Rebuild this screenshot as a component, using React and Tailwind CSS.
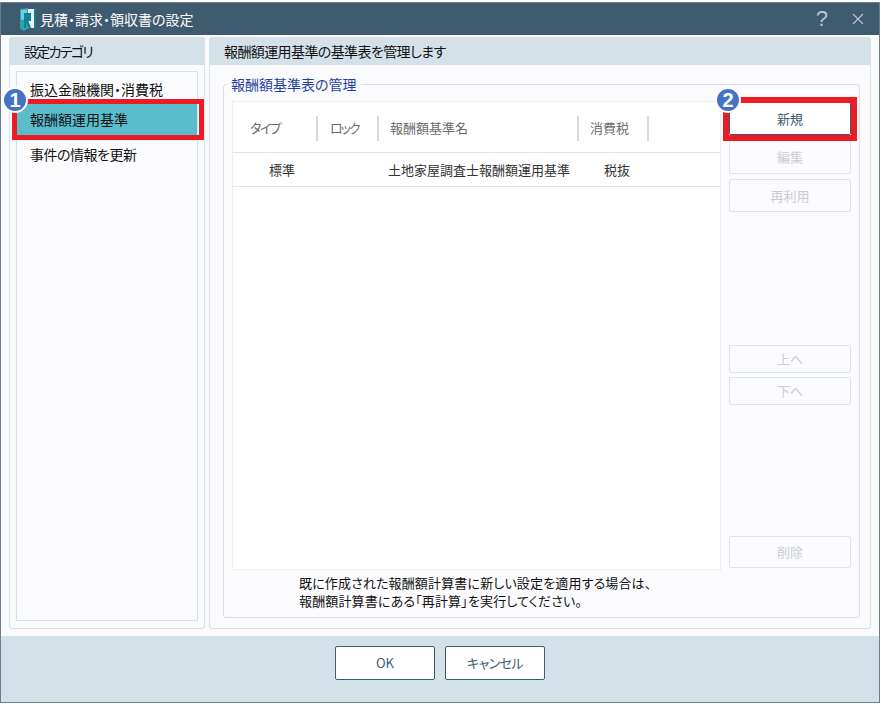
const font = "[font-family:'Noto_Sans_CJK_JP',sans-serif] [font-feature-settings:'palt']";

function Logo() {
  return (
    <svg width="18" height="24" viewBox="0 0 18 24" className="shrink-0">
      <path d="M1 2 L9 1 L9 22 L4 24 L1 21 Z" fill="#2aa3b3" />
      <path d="M2 3 L8 2.5 L8 12 L2 13 Z" fill="#6fd0da" />
      <path d="M9 2 H15 V21 H9 Z" fill="#eef4f6" />
      <path d="M15 1 H17 V22 H15 Z" fill="#1a7a90" />
      <path d="M5 6 H12 V14 H9.5 L12 21 H9.5 L7 14.5 V21 H5 Z" fill="#13809a" />
    </svg>
  );
}

function Badge({ n, className }) {
  return (
    <div className={"absolute flex h-[26px] w-[26px] items-center justify-center rounded-full border-2 border-white bg-[#4472c4] text-[20px] font-bold leading-none text-white [font-family:'Liberation_Sans',sans-serif] " + className}>
      {n}
    </div>
  );
}

function SideBtn({ children, className = "", on = false }) {
  return (
    <div className={"flex w-[122px] items-center justify-center rounded-[2px] border text-[13px] " + (on ? "border-[#3f5b70] bg-white text-[#3f5b70] " : "border-[#d9e5ec] bg-[#fbfbfd] text-[#c9ced3] ") + className}>
      {children}
    </div>
  );
}

function FooterBtn({ children, className = "" }) {
  return (
    <div className={"flex h-[34px] w-[100px] items-center justify-center rounded-[2px] border border-[#3f5b70] bg-white text-[13px] text-[#3f5b70] " + className}>
      {children}
    </div>
  );
}

export default function App() {
  return (
    <div className={"h-[704px] w-[880px] bg-white pt-[2px] text-[#111] " + font}>
      <div className="flex h-[701px] w-[880px] flex-col border border-[#6b7f92] bg-[#fbfbfd]">
        {/* title */}
        <div className="flex h-[32px] shrink-0 items-center bg-[#3f5b70] pl-[18px] pr-[15px] text-white">
          <Logo />
          <span className="ml-[3px] text-[14px]">見積・請求・領収書の設定</span>
          <span className="ml-auto mr-[24px] text-[22px] leading-none text-[#b9c4cd] [font-family:'Liberation_Sans',sans-serif]">?</span>
          <svg width="12" height="12" viewBox="0 0 12 12" className="text-[#b9c4cd]">
            <path d="M1 1 L11 11 M11 1 L1 11" stroke="currentColor" strokeWidth="1.2" />
          </svg>
        </div>

        {/* body */}
        <div className="flex h-[601px] shrink-0 gap-[4px] pl-[8px] pr-[8px] pt-[2px]">
          {/* left */}
          <div className="relative flex h-[592px] w-[196px] shrink-0 flex-col rounded-[3px] border border-t-0 border-[#d5e1e9]">
            <div className="-mx-px flex h-[28px] shrink-0 items-center rounded-t-[3px] bg-[#d5e1e9] pl-[15px] text-[14px] tracking-[-1.7px]">設定カテゴリ</div>
            <div className="mx-[6px] mt-[6px] flex h-[550px] flex-col border border-[#d2e2ea] pt-[1px] text-[14px]">
              <div className="flex h-[31px] items-start pl-[13px] pt-[6px] leading-[20px]">振込金融機関・消費税</div>
              <div className="flex h-[31px] items-center bg-[#5bbdcb] pl-[13px]">報酬額運用基準</div>
              <div className="flex h-[38px] items-center pl-[13px] tracking-[-0.5px]">事件の情報を更新</div>
            </div>
            <div className="absolute left-[2px] top-[62px] h-[41px] w-[192px] border-[5px] border-[#ed1c24]" />
          </div>

          {/* right */}
          <div className="relative flex h-[592px] w-[662px] shrink-0 flex-col rounded-[3px] border border-t-0 border-[#d5e1e9]">
            <div className="-mx-px flex h-[28px] shrink-0 items-center rounded-t-[3px] bg-[#d5e1e9] pl-[15px] text-[14px] tracking-[-0.6px]">報酬額運用基準の基準表を管理します</div>
            <div className="relative ml-[13px] mt-[19px] flex h-[534px] w-[637px] rounded-[3px] border border-[#d6e0e5] pl-[8px] pt-[16px]">
              <div className="absolute left-[3px] top-[-9px] bg-[#fbfbfd] px-[4px] text-[14px] leading-[17px] text-[#1f3f9f]">報酬額基準表の管理</div>
              <div className="flex w-[628px] gap-[8px]">
                <div className="flex w-[489px] shrink-0 flex-col self-start">
                  <div className="flex h-[469px] flex-col border border-[#eeeeee] bg-white text-[13px]">
                    <div className="flex h-[51px] shrink-0 items-center border-b border-[#e4e4e4] pt-[2px] text-[#6b6b6b]">
                      <div className="flex h-[25px] w-[85px] items-center border-r-2 border-[#d9d9d9] pl-[17px] tracking-[-1.5px]">タイプ</div>
                      <div className="flex h-[25px] w-[61px] items-center border-r-2 border-[#d9d9d9] pl-[12px] tracking-[-2px]">ロック</div>
                      <div className="flex h-[25px] w-[200px] items-center border-r-2 border-[#d9d9d9] pl-[11px]">報酬額基準名</div>
                      <div className="flex h-[25px] w-[70px] items-center border-r-2 border-[#d9d9d9] pl-[11px]">消費税</div>
                    </div>
                    <div className="flex h-[34px] shrink-0 items-center border-b border-[#e4e4e4] text-[#333]">
                      <div className="w-[85px] pl-[36px]">標準</div>
                      <div className="w-[61px]" />
                      <div className="w-[200px] pl-[9px]">土地家屋調査士報酬額運用基準</div>
                      <div className="w-[70px] pl-[25px]">税抜</div>
                    </div>
                  </div>
                  <div className="pl-[67px] pt-[4px] text-[13px] leading-[18px] tracking-[0.15px]">
                    <div>既に作成された報酬額計算書に新しい設定を適用する場合は、</div>
                    <div>報酬額計算書にある「再計算」を実行してください。</div>
                  </div>
                </div>
                <div className="flex w-[122px] shrink-0 flex-col pt-[1px]">
                  <SideBtn on className="h-[33px]">新規</SideBtn>
                  <SideBtn className="mt-[5px] h-[34px]">編集</SideBtn>
                  <SideBtn className="mt-[5px] h-[33px]">再利用</SideBtn>
                  <SideBtn className="mt-[133px] h-[28px]">上へ</SideBtn>
                  <SideBtn className="mt-[4px] h-[28px]">下へ</SideBtn>
                  <SideBtn className="mt-[131px] h-[32px]">削除</SideBtn>
                </div>
              </div>
            </div>
            <div className="absolute left-[513px] top-[60px] h-[44px] w-[134px] border-[6px] border-[#ed1c24]" />
          </div>
        </div>

        {/* footer */}
        <div className="flex flex-1 items-start justify-center gap-[10px] bg-[#d5e1e9] pt-[10px]">
          <FooterBtn>OK</FooterBtn>
          <FooterBtn className="tracking-[-0.6px]">キャンセル</FooterBtn>
        </div>
      </div>
      <Badge n="1" className="left-[2px] top-[87px]" />
      <Badge n="2" className="left-[715px] top-[87px]" />
    </div>
  );
}
